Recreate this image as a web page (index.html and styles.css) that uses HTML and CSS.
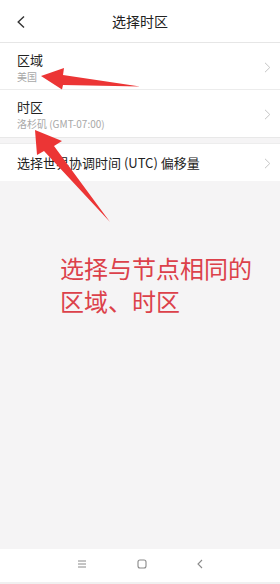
FILE: index.html
```html
<!DOCTYPE html>
<html lang="zh-CN">
<head>
<meta charset="utf-8">
<title>选择时区</title>
<link rel="stylesheet" href="styles.css">
</head>
<body>
<div class="screen">
  <header class="topbar">
    <svg class="back" width="8" height="12" viewBox="0 0 8 12"><path d="M7 0.5 L1.2 6 L7 11.5" fill="none" stroke="#333" stroke-width="1.4"/></svg>
    <div class="title">选择时区</div>
  </header>
  <div class="group">
    <div class="row row-two">
      <div class="texts">
        <div class="label">区域</div>
        <div class="sub">美国</div>
      </div>
      <svg class="chev" width="7" height="11" viewBox="0 0 7 11"><path d="M1 0.8 L5.8 5.5 L1 10.2" fill="none" stroke="#c4c4c4" stroke-width="1"/></svg>
    </div>
    <div class="row row-two">
      <div class="texts">
        <div class="label">时区</div>
        <div class="sub">洛杉矶 (GMT-07:00)</div>
      </div>
      <svg class="chev" width="7" height="11" viewBox="0 0 7 11"><path d="M1 0.8 L5.8 5.5 L1 10.2" fill="none" stroke="#c4c4c4" stroke-width="1"/></svg>
    </div>
  </div>
  <div class="gap"></div>
  <div class="group">
    <div class="row row-one">
      <div class="label">选择世界协调时间 (UTC) 偏移量</div>
      <svg class="chev" width="7" height="11" viewBox="0 0 7 11"><path d="M1 0.8 L5.8 5.5 L1 10.2" fill="none" stroke="#c4c4c4" stroke-width="1"/></svg>
    </div>
  </div>
  <div class="filler"></div>
  <nav class="navbar">
    <svg width="10" height="8" viewBox="0 0 10 8"><path d="M1 1 H9 M1 4 H9 M1 7 H9" stroke="#8a8a8a" stroke-width="1"/></svg>
    <svg width="10" height="10" viewBox="0 0 10 10"><rect x="1" y="1" width="8" height="8" rx="2" fill="none" stroke="#8a8a8a" stroke-width="1.1"/></svg>
    <svg width="6" height="10" viewBox="0 0 6 10"><path d="M5 1 L1 5 L5 9" fill="none" stroke="#8a8a8a" stroke-width="1.1"/></svg>
  </nav>

  <svg class="arrows" width="280" height="584" viewBox="0 0 280 584">
    <polygon points="41,76 64,68 63,75 140,86.5 63,85 62,89.5" fill="#ec3535"/>
    <polygon points="35,130 62,141 54,146 110,222 44,151 37,155" fill="#ec3535"/>
  </svg>
  <div class="note">选择与节点相同的<br>区域、时区</div>
</div>
</body>
</html>
```

FILE: styles.css
```css
* { box-sizing: border-box; }
html, body { margin: 0; padding: 0; }
body {
  font-family: "Noto Sans CJK SC", "Noto Sans", sans-serif;
  background: #f5f4f5;
}
.screen {
  position: relative;
  width: 280px;
  height: 584px;
  display: flex;
  flex-direction: column;
  background: #f5f4f5;
  overflow: hidden;
}
.topbar {
  position: relative;
  height: 43px;
  flex: none;
  background: #fff;
  border-bottom: 1px solid #e6e6e6;
  display: flex;
  align-items: center;
  justify-content: center;
}
.back {
  position: absolute;
  left: 17px;
  top: 16px;
}
.title {
  font-size: 14px;
  color: #222;
  line-height: 20px;
  margin-top: -1px;
}
.group { background: #fff; flex: none; }
.row {
  display: flex;
  align-items: center;
  justify-content: space-between;
  padding: 0 9px 0 17px;
  border-bottom: 1px solid #ececec;
}
.row-two { height: 47px; padding-top: 2px; }
.group .row:last-child { border-bottom: none; }
.texts { display: flex; flex-direction: column; }
.label {
  font-size: 13px;
  line-height: 16px;
  color: #222;
}
.sub {
  font-size: 10px;
  line-height: 13px;
  margin-top: 2px;
  color: #a8a8a8;
}
.row-one { height: 37px; padding-top: 1px; }
.gap {
  height: 7px;
  flex: none;
  background: #f5f4f5;
  border-top: 1px solid #e8e8e8;
  border-bottom: 1px solid #ededed;
}
.filler { flex: 1; }
.navbar {
  height: 35px;
  flex: none;
  background: #fff;
  display: flex;
  align-items: center;
  justify-content: center;
  gap: 50px;
  padding-bottom: 3px;
  border-bottom: 2px solid #f0f0f0;
}
.arrows {
  position: absolute;
  left: 0;
  top: 0;
  pointer-events: none;
}
.note {
  position: absolute;
  left: 60px;
  top: 251px;
  font-size: 24px;
  line-height: 33px;
  color: #dc414a;
}
```
